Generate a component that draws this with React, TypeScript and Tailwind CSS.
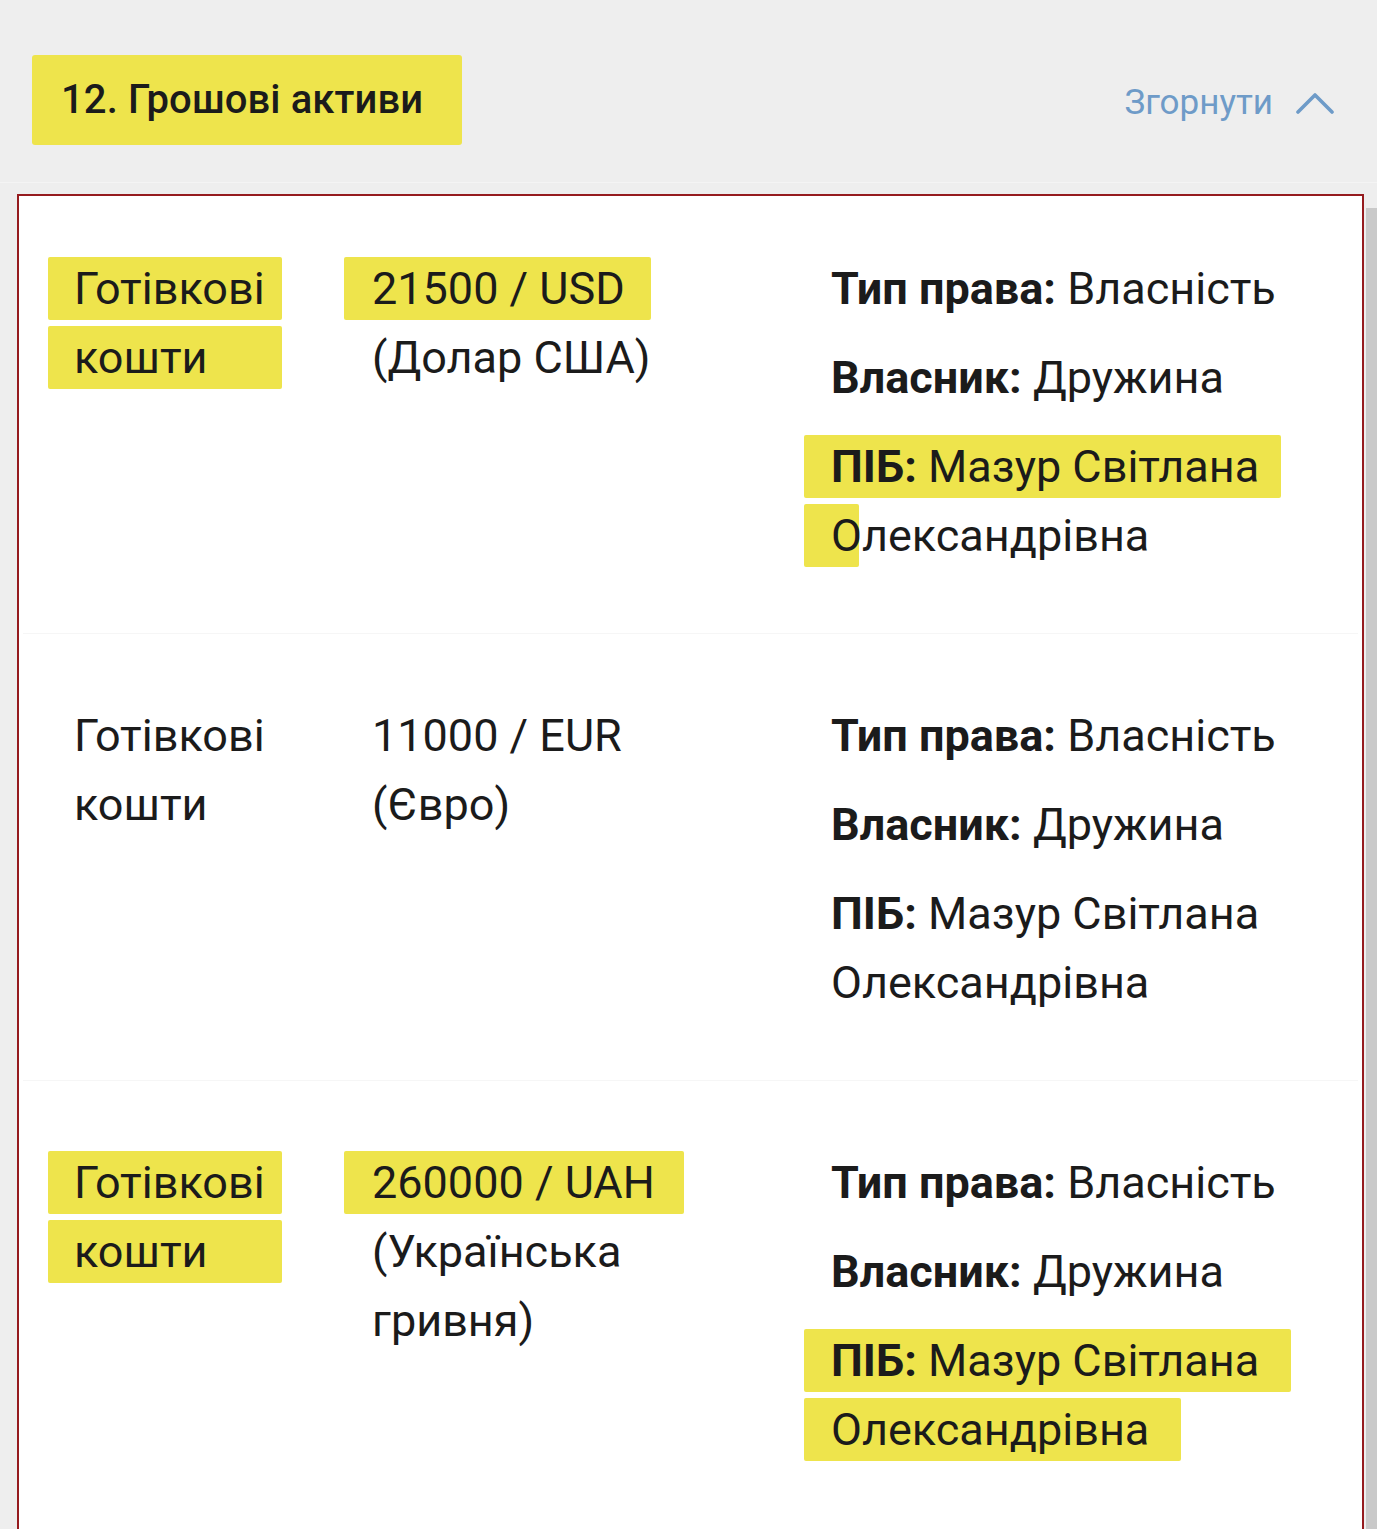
import React from "react";

const Y = "bg-[#eee44c]";

function Line({ children, hl, hlLeft = 27, hlWidth }: { children: React.ReactNode; hl?: boolean; hlLeft?: number; hlWidth?: number }) {
  return (
    <div className="h-[69px] flex items-center relative whitespace-nowrap">
      {hl && (
        <span
          className={`absolute top-[3px] h-[63px] ${Y} rounded-[2px]`}
          style={{ left: -hlLeft, width: hlWidth }}
        />
      )}
      <span className="relative">{children}</span>
    </div>
  );
}

type RowProps = {
  hl: boolean;
  amount: string;
  currency: string[];
  amountHl?: number;
  pibHl?: number;
  lastHl?: number;
  first?: boolean;
};

function Row({ hl, amount, currency, amountHl, pibHl, lastHl, first }: RowProps) {
  return (
    <div className={`grid grid-cols-[298px_459px_1fr] pl-[55px] ${first ? "pt-[58px]" : "pt-[67px]"} pb-[63px]`}>
      <div>
        <Line hl={hl} hlLeft={26} hlWidth={234}>Готівкові</Line>
        <Line hl={hl} hlLeft={26} hlWidth={234}>кошти</Line>
      </div>
      <div>
        <Line hl={!!amountHl} hlLeft={28} hlWidth={amountHl}>{amount}</Line>
        {currency.map((c) => (
          <Line key={c}>{c}</Line>
        ))}
      </div>
      <div className="flex flex-col gap-[20px]">
        <Line>
          <b className="font-bold">Тип права:</b> Власність
        </Line>
        <Line>
          <b className="font-bold">Власник:</b> Дружина
        </Line>
        <div>
          <Line hl={!!pibHl} hlWidth={pibHl}>
            <b className="font-bold">ПІБ:</b> Мазур Світлана
          </Line>
          <Line hl={!!lastHl} hlWidth={lastHl}>Олександрівна</Line>
        </div>
      </div>
    </div>
  );
}

export default function App() {
  return (
    <div className="w-[1377px] h-[1529px] bg-[#eeeeee] overflow-hidden text-[#1b1b1b]" style={{ fontFamily: "Roboto, 'Noto Sans', sans-serif" }}>
      <div className="h-[183px] border-b border-[#f4f4f4] flex items-center justify-between pt-[18px] pl-[32px] pr-[43px]">
        <div className={`${Y} h-[90px] w-[430px] flex items-center pl-[29px] text-[40px] font-medium tracking-[0.1px] rounded-[3px]`}>
          12. Грошові активи
        </div>
        <div className="flex items-center gap-[23px] text-[#6e9bc8] text-[35px] pt-[6px]">
          <span>Згорнути</span>
          <svg width="38" height="22" viewBox="0 0 38 22" fill="none">
            <polyline points="2,20 19,3 36,20" stroke="#6e9bc8" strokeWidth="3.6" strokeLinecap="round" strokeLinejoin="round" />
          </svg>
        </div>
      </div>
      <div className="flex mt-[11px]">
        <div className="ml-[17px] w-[1347px] h-[1340px] border-[2px] border-[#951b1e] bg-white text-[45px] leading-none">
          <Row first hl amount="21500 / USD" currency={["(Долар США)"]} amountHl={307} pibHl={477} lastHl={55} />
          <div className="h-px bg-[#f6f6f6] mx-[4px]" />
          <Row hl={false} amount="11000 / EUR" currency={["(Євро)"]} />
          <div className="h-px bg-[#f6f6f6] mx-[4px]" />
          <Row hl amount="260000 / UAH" currency={["(Українська", "гривня)"]} amountHl={340} pibHl={487} lastHl={377} />
        </div>
        <div className="ml-[2px] w-[11px] h-[1340px] mt-[14px] bg-[#c9c9c9]" />
      </div>
    </div>
  );
}
